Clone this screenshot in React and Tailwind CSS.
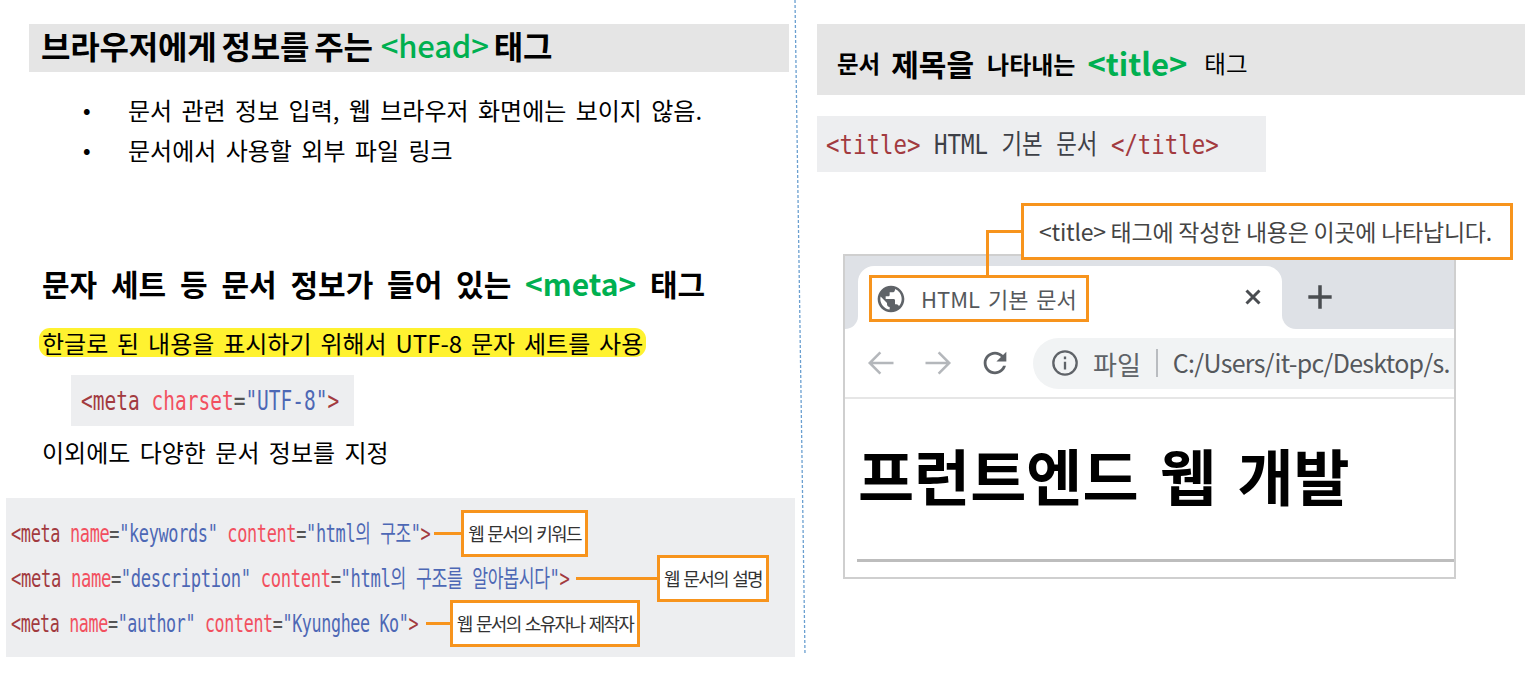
import React from "react";

const KR = "font-['Noto_Sans_CJK_KR','Noto_Sans',sans-serif]";
const MONO = "font-['DejaVu_Sans_Mono','Noto_Sans_CJK_KR',monospace]";

function Tag({ children }) { return <span className="text-[#a23a3f]">{children}</span>; }
function Attr({ children }) { return <span className="text-[#f2505f]">{children}</span>; }
function Str({ children }) { return <span className="text-[#4d68b5]">{children}</span>; }
function Eq() { return <span className="text-[#555]">=</span>; }

function MetaRow({ width, line, box, boxW, scale, children }) {
  return (
    <div className="flex h-[45px] items-center">
      <div className={`${width} shrink-0 overflow-visible`}>
        <div className={`${MONO} origin-left ${scale} whitespace-nowrap text-[24px] leading-none tracking-[-0.5px]`}>{children}</div>
      </div>
      <div className={`${line} h-[3px] shrink-0 bg-[#f7941d]`} />
      <div className={`${boxW} flex h-[47px] shrink-0 items-center justify-center border-[3px] border-[#f7941d] bg-white ${KR} whitespace-nowrap text-[18px] tracking-[-1.7px] text-[#333] [word-spacing:2px]`}>
        {box}
      </div>
    </div>
  );
}

function GlobeIcon() {
  return (
    <svg viewBox="0 0 24 24" className="h-[32px] w-[32px] shrink-0 fill-[#5f6368]">
      <path d="M12 2C6.48 2 2 6.48 2 12s4.48 10 10 10 10-4.48 10-10S17.52 2 12 2zm-1 17.93c-3.95-.49-7-3.85-7-7.93 0-.62.08-1.21.21-1.79L9 15v1c0 1.1.9 2 2 2v1.93zm6.9-2.54c-.26-.81-1-1.39-1.9-1.39h-1v-3c0-.55-.45-1-1-1H8v-2h2c.55 0 1-.45 1-1V7h2c1.1 0 2-.9 2-2v-.41c2.93 1.19 5 4.06 5 7.41 0 2.08-.8 3.97-2.1 5.39z" />
    </svg>
  );
}

function ArrowIcon({ flip }) {
  return (
    <svg viewBox="0 0 24 24" className={`h-[30px] w-[30px] shrink-0 fill-none stroke-[#b4b7bb] stroke-[2] ${flip ? "-scale-x-100" : ""}`}>
      <path d="M22 12H3M11.5 3.5L3 12l8.5 8.5" />
    </svg>
  );
}

function ReloadIcon() {
  return (
    <svg viewBox="0 0 24 24" className="h-[34px] w-[34px] shrink-0 fill-[#5f6368]">
      <path d="M17.65 6.35C16.2 4.9 14.21 4 12 4c-4.42 0-7.99 3.58-7.99 8s3.57 8 7.99 8c3.73 0 6.84-2.55 7.73-6h-2.08c-.82 2.33-3.04 4-5.65 4-3.31 0-6-2.69-6-6s2.69-6 6-6c1.66 0 3.14.69 4.22 1.78L13 11h7V4l-2.35 2.35z" />
    </svg>
  );
}

function InfoIcon() {
  return (
    <svg viewBox="0 0 24 24" className="h-[28px] w-[28px] shrink-0 fill-none stroke-[#5f6368] stroke-[2]">
      <circle cx="12" cy="12" r="10" />
      <path d="M12 11v6.5M12 6.5v2.2" />
    </svg>
  );
}

function CloseIcon() {
  return (
    <svg viewBox="0 0 24 24" className="h-[24px] w-[24px] fill-none stroke-[#4a4d51] stroke-[3]">
      <path d="M5.5 5.5l13 13M18.5 5.5l-13 13" />
    </svg>
  );
}

function PlusIcon() {
  return (
    <svg viewBox="0 0 24 24" className="h-[28px] w-[28px] fill-none stroke-[#4a4d51] stroke-[3]">
      <path d="M12 2v20M2 12h20" />
    </svg>
  );
}

export default function App() {
  return (
    <div className={`relative flex h-[683px] w-[1540px] overflow-hidden bg-white ${KR} text-black`}>
      <svg className="absolute left-[790px] top-0 z-10 h-[660px] w-[20px]" viewBox="0 0 20 660">
        <path d="M5 0L15 655" className="fill-none stroke-[#6a9fd0] stroke-[1.3]" strokeDasharray="3 2" />
      </svg>

      {/* Left column */}
      <div className="w-[795px] shrink-0">
        <div className="ml-[29px] mt-[24px] flex h-[48px] w-[760px] items-center whitespace-nowrap bg-[#e5e5e5] pb-[6px] pl-[12px] text-[32px] font-bold tracking-[-0.2px] [word-spacing:-2px]">
          <span>브라우저에게 정보를 주는&nbsp;</span>
          <span className="ml-[3px] text-[31px] font-medium text-[#00b050]">&lt;head&gt;</span>
          <span>&nbsp;태그</span>
        </div>

        <ul className="mt-[18px] text-[24px] [word-spacing:4px]">
          <li className="flex h-[40px] items-center">
            <span className="ml-[83px] w-[45px] text-[20px] font-bold">•</span>
            <span className="whitespace-nowrap">문서 관련 정보 입력, 웹 브라우저 화면에는 보이지 않음.</span>
          </li>
          <li className="flex h-[40px] items-center">
            <span className="ml-[83px] w-[45px] text-[20px] font-bold">•</span>
            <span className="whitespace-nowrap">문서에서 사용할 외부 파일 링크</span>
          </li>
        </ul>

        <div className="ml-[42px] mt-[95px] flex h-[40px] items-center whitespace-nowrap pb-[3px] text-[30px] font-bold [word-spacing:7px]">
          <span>문자 세트 등 문서 정보가 들어 있는&nbsp;</span>
          <span className="text-[#00b050]">&lt;meta&gt;</span>
          <span>&nbsp;태그</span>
        </div>

        <div className="ml-[39px] mt-[23px] flex h-[29px] w-[607px] items-center rounded-[11px] bg-[#fff230] pl-[3px] whitespace-nowrap text-[24px] [word-spacing:3.5px]">
          한글로 된 내용을 표시하기 위해서 UTF-8 문자 세트를 사용
        </div>

        <div className="ml-[71px] mt-[18px] flex h-[51px] w-[283px] items-center bg-[#edeef0] pl-[10px]">
          <div className={`${MONO} origin-left scale-x-[0.75] whitespace-nowrap text-[26px] leading-none`}>
            <Tag>&lt;meta</Tag> <Attr>charset</Attr><Eq /><Str>"UTF-8"</Str><Tag>&gt;</Tag>
          </div>
        </div>

        <div className="ml-[42px] mt-[6px] flex h-[40px] items-center whitespace-nowrap text-[24px] [word-spacing:4px]">
          이외에도 다양한 문서 정보를 지정
        </div>

        <div className="ml-[6px] mt-[26px] h-[159px] w-[789px] bg-[#edeef0] pl-[5px] pt-[13px]">
          <MetaRow width="w-[423px]" line="w-[27px]" boxW="w-[127px]" scale="scale-x-[0.705]" box="웹 문서의 키워드">
            <Tag>&lt;meta</Tag> <Attr>name</Attr><Eq /><Str>"keywords"</Str> <Attr>content</Attr><Eq /><Str>"html의 구조"</Str><Tag>&gt;</Tag>
          </MetaRow>
          <MetaRow width="w-[565px]" line="w-[81px]" boxW="w-[112px]" scale="scale-x-[0.716]" box="웹 문서의 설명">
            <Tag>&lt;meta</Tag> <Attr>name</Attr><Eq /><Str>"description"</Str> <Attr>content</Attr><Eq /><Str>"html의 구조를 알아봅시다"</Str><Tag>&gt;</Tag>
          </MetaRow>
          <MetaRow width="w-[415px]" line="w-[24px]" boxW="w-[190px]" scale="scale-x-[0.695]" box="웹 문서의 소유자나 제작자">
            <Tag>&lt;meta</Tag> <Attr>name</Attr><Eq /><Str>"author"</Str> <Attr>content</Attr><Eq /><Str>"Kyunghee Ko"</Str><Tag>&gt;</Tag>
          </MetaRow>
        </div>
      </div>

      {/* Right column */}
      <div className="ml-[22px] w-[708px] shrink-0">
        <div className="mt-[24px] flex h-[71px] items-center whitespace-nowrap bg-[#e5e5e5] pl-[20px] pt-[8px] font-bold">
          <span className="text-[23.5px]">문서</span>
          <span className="ml-[11px] text-[30px]">제목을</span>
          <span className="ml-[13px] text-[24px]">나타내는</span>
          <span className="ml-[12px] text-[31px] text-[#00b050]">&lt;title&gt;</span>
          <span className="ml-[17px] text-[23.5px] font-normal">태그</span>
        </div>

        <div className="mt-[21px] flex h-[56px] w-[449px] items-center bg-[#edeef0] pl-[9px]">
          <div className={`${MONO} origin-left scale-x-[0.83] whitespace-nowrap text-[27px] leading-none`}>
            <Tag>&lt;title&gt;</Tag> <span className="text-[#3d4047]">HTML 기본 문서</span> <Tag>&lt;/title&gt;</Tag>
          </div>
        </div>

        <div className="relative mt-[31px]">
          {/* Callout */}
          <div className="relative z-10 ml-[204px] flex h-[57px] w-[492px] items-center whitespace-nowrap border-[3px] border-[#f7941d] bg-white pl-[15px] text-[23px] tracking-[-0.25px] text-[#444]">
            &lt;title&gt; 태그에 작성한 내용은 이곳에 나타납니다.
          </div>
          <div className="absolute left-[169px] top-[27px] z-10 h-[46px] w-[36px] border-l-[3px] border-t-[3px] border-[#f7941d]" />

          {/* Browser */}
          <div className="relative -mt-[6px] ml-[26px] h-[325px] w-[613px] border-2 border-[#cfcfcf] bg-white">
            <div className="flex h-[73px]">
              <div className="w-[13px] shrink-0 rounded-br-[14px] bg-[#dee1e6]" />
              <div className="w-[424px] shrink-0 bg-[#dee1e6] pt-[10px]">
                <div className="flex h-[63px] items-start rounded-t-[16px] bg-white pl-[11px] pt-[9px]">
                  <div className="flex h-[47px] w-[220px] shrink-0 items-center border-[3px] border-[#f7941d] pl-[3px]">
                    <GlobeIcon />
                    <span className="ml-[14px] whitespace-nowrap text-[22px] text-[#55585c] [word-spacing:3px]">HTML 기본 문서</span>
                  </div>
                  <div className="ml-[152px] mt-[10px]"><CloseIcon /></div>
                </div>
              </div>
              <div className="flex-1 rounded-bl-[14px] bg-[#dee1e6] pl-[24px] pt-[27px]"><PlusIcon /></div>
            </div>

            <div className="flex h-[70px] items-center overflow-hidden border-b-2 border-[#e6e6e6] pl-[21px]">
              <ArrowIcon />
              <div className="ml-[27px] shrink-0"><ArrowIcon flip /></div>
              <div className="ml-[25px] shrink-0"><ReloadIcon /></div>
              <div className="ml-[21px] flex h-[51px] min-w-0 flex-1 items-center overflow-hidden rounded-l-full bg-[#f1f3f4] pl-[18px]">
                <InfoIcon />
                <span className="ml-[14px] whitespace-nowrap text-[26px] text-[#5f6368]">파일</span>
                <span className="ml-[15px] h-[28px] w-[2px] shrink-0 bg-[#b9bcc0]" />
                <span className="ml-[15px] whitespace-nowrap text-[25px] tracking-[-0.7px] text-[#55585c]">C:/Users/it-pc/Desktop/s.</span>
              </div>
            </div>

            <div className="overflow-hidden pl-[12px]">
              <div className="ml-[1px] mt-[30px] flex h-[90px] items-center whitespace-nowrap text-[61px] font-bold leading-none [word-spacing:7.5px]">
                프런트엔드 웹 개발
              </div>
              <div className="mt-[40px] h-[3px] bg-[#bdbdbd]" />
            </div>
          </div>
        </div>
      </div>
    </div>
  );
}
